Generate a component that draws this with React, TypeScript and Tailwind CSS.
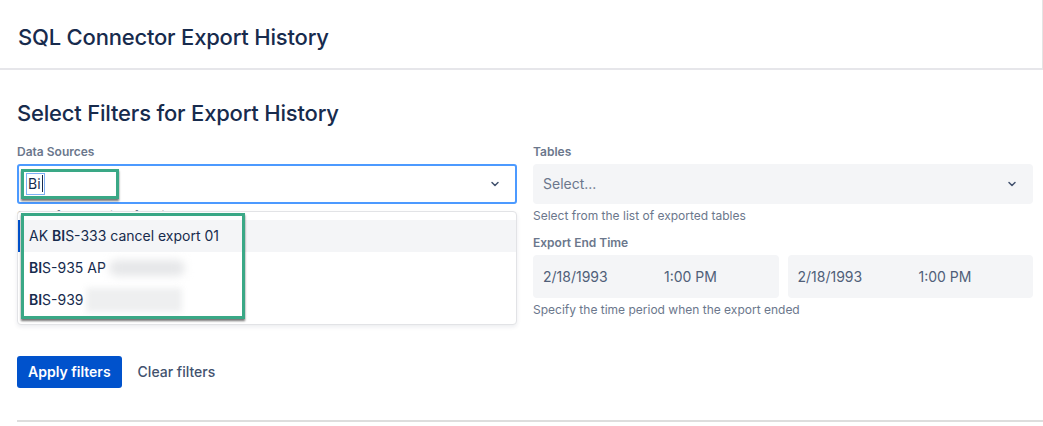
import { ChevronDown } from "lucide-react"

const font = { fontFamily: "Inter, 'Noto Sans', sans-serif" }

const Label = ({ children }: { children: React.ReactNode }) => (
  <div className="text-xs font-semibold text-[#6B778C] leading-4 mb-1">{children}</div>
)

const Helper = ({ children }: { children: React.ReactNode }) => (
  <div className="text-xs text-[#6B778C] leading-4 mt-1">{children}</div>
)

const DateTime = () => (
  <div className="flex items-center h-[43px] rounded bg-[#F4F5F7] px-[10px] text-sm text-[#505F79]">
    <span className="w-[121px]">2/18/1993</span>
    <span>1:00 PM</span>
  </div>
)

export default function App() {
  return (
    <div className="bg-white w-[1043px] h-[426px] overflow-hidden text-[#172B4D]" style={font}>
      {/*Header*/}
      <div className="h-[70px] border-b-2 border-[#e6e6ea] border-r border-r-[#e4e4e4] flex items-center pt-[6px] px-[18px]">
        <h1 className="text-[22px] font-medium tracking-[-0.2px]">SQL Connector Export History</h1>
      </div>

      <div className="pl-[17px] pr-[10px]">
        <h2 className="text-[22px] font-medium tracking-[-0.2px] mt-[29px] leading-7">Select Filters for Export History</h2>

        <div className="grid grid-cols-2 gap-4 mt-[17px]">
          {/*Data sources*/}
          <div className="relative">
            <Label>Data Sources</Label>
            <div className="h-10 border-2 border-[#4C9AFF] rounded-[3px] bg-white flex items-center pl-[7px] pr-[14px]">
              <span className="text-sm border border-[#7fb0f5] px-[1px] leading-5">Bi<span className="border-l border-[#172B4D] ml-[1px]"></span></span>
              <ChevronDown className="ml-auto w-3 h-3 text-[#42526E]" strokeWidth={3} />
            </div>
            <Helper>Select from the list of available data sources</Helper>

            {/*Menu*/}
            <div className="absolute left-0 right-0 top-[67px] bg-white border border-[#e2e3e6] rounded shadow-[0_2px_4px_rgba(9,30,66,0.08)] py-2 text-sm text-[#172B4D]">
              <div className="h-8 flex items-center pl-[9px] bg-[#F4F5F7] border-l-2 border-[#0052CC]">
                AK&nbsp;<b className="font-semibold">BI</b>S-333 cancel export 01
              </div>
              <div className="h-8 flex items-center pl-[11px]">
                <b className="font-semibold">BI</b>S-935 AP
                <span className="ml-[3px] w-[76px] h-[16px] rounded-full bg-[#e6e7e9] blur-[4px]"></span>
              </div>
              <div className="h-8 flex items-center pl-[11px]">
                <b className="font-semibold">BI</b>S-939
                <span className="ml-[2px] w-[96px] h-[24px] bg-[#eeeff0] blur-[3px]"></span>
              </div>
            </div>

            {/*Annotation boxes*/}
            <div className="absolute left-[4px] top-[25px] w-[98px] h-[30px] border-[3px] border-[#3aa886] shadow-[0_2px_2px_rgba(0,0,0,0.55)]"></div>
            <div className="absolute left-[4px] top-[69px] w-[224px] h-[106px] border-[3px] border-[#3aa886] shadow-[0_2px_2px_rgba(0,0,0,0.55)]"></div>
          </div>

          {/*Tables + time*/}
          <div>
            <Label>Tables</Label>
            <div className="h-10 rounded bg-[#F4F5F7] flex items-center pl-[10px] pr-[15px] text-sm text-[#6B778C]">
              Select...
              <ChevronDown className="ml-auto w-3 h-3 text-[#42526E]" strokeWidth={3} />
            </div>
            <Helper>Select from the list of exported tables</Helper>
            <div className="mt-[11px]">
              <Label>Export End Time</Label>
            </div>
            <div className="grid grid-cols-2 gap-[9px]">
              <DateTime />
              <DateTime />
            </div>
            <Helper>Specify the time period when the export ended</Helper>
          </div>
        </div>

        {/*Buttons*/}
        <div className="flex items-center gap-4 mt-[38px]">
          <button className="h-8 px-[11px] rounded-[3px] bg-[#0052CC] text-white text-sm font-semibold">Apply filters</button>
          <button className="text-sm font-medium text-[#42526E]">Clear filters</button>
        </div>
      </div>

      <div className="ml-[17px] mt-[32px] h-[2px] bg-[#dddddd]"></div>
    </div>
  )
}
